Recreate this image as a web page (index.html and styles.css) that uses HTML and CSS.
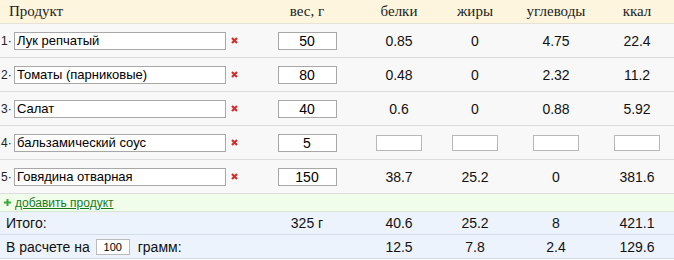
FILE: index.html
```html
<!DOCTYPE html>
<html lang="ru">
<head>
<meta charset="utf-8">
<link rel="stylesheet" href="styles.css">
</head>
<body>
<div class="calc">
  <div class="row head">
    <div class="c-name">Продукт</div>
    <div class="c">вес, г</div>
    <div class="c">белки</div>
    <div class="c">жиры</div>
    <div class="c">углеводы</div>
    <div class="c">ккал</div>
  </div>

  <div class="row item">
    <div class="c-name"><span class="num">1·</span><input class="name" value="Лук репчатый"><span class="del"><svg viewBox="0 0 7 7" width="7" height="7"><path d="M1 1L6 6M6 1L1 6"/></svg></span></div>
    <div class="c"><input class="w" value="50"></div>
    <div class="c">0.85</div><div class="c">0</div><div class="c">4.75</div><div class="c">22.4</div>
  </div>

  <div class="row item">
    <div class="c-name"><span class="num">2·</span><input class="name" value="Томаты (парниковые)"><span class="del"><svg viewBox="0 0 7 7" width="7" height="7"><path d="M1 1L6 6M6 1L1 6"/></svg></span></div>
    <div class="c"><input class="w" value="80"></div>
    <div class="c">0.48</div><div class="c">0</div><div class="c">2.32</div><div class="c">11.2</div>
  </div>

  <div class="row item">
    <div class="c-name"><span class="num">3·</span><input class="name" value="Салат"><span class="del"><svg viewBox="0 0 7 7" width="7" height="7"><path d="M1 1L6 6M6 1L1 6"/></svg></span></div>
    <div class="c"><input class="w" value="40"></div>
    <div class="c">0.6</div><div class="c">0</div><div class="c">0.88</div><div class="c">5.92</div>
  </div>

  <div class="row item">
    <div class="c-name"><span class="num">4·</span><input class="name" value="бальзамический соус"><span class="del"><svg viewBox="0 0 7 7" width="7" height="7"><path d="M1 1L6 6M6 1L1 6"/></svg></span></div>
    <div class="c"><input class="w" value="5"></div>
    <div class="c"><input class="empty"></div><div class="c"><input class="empty"></div><div class="c"><input class="empty"></div><div class="c"><input class="empty"></div>
  </div>

  <div class="row item">
    <div class="c-name"><span class="num">5·</span><input class="name" value="Говядина отварная"><span class="del"><svg viewBox="0 0 7 7" width="7" height="7"><path d="M1 1L6 6M6 1L1 6"/></svg></span></div>
    <div class="c"><input class="w" value="150"></div>
    <div class="c">38.7</div><div class="c">25.2</div><div class="c">0</div><div class="c">381.6</div>
  </div>

  <div class="add">
    <svg class="plus" viewBox="0 0 7 7" width="7" height="7"><path d="M2.5 0h2v2.5h2.5v2h-2.5v2.5h-2v-2.5h-2.5v-2h2.5z"/></svg>
    <a href="#">добавить продукт</a>
  </div>

  <div class="row total">
    <div class="c-name">Итого:</div>
    <div class="c">325 г</div>
    <div class="c">40.6</div><div class="c">25.2</div><div class="c">8</div><div class="c">421.1</div>
  </div>

  <div class="row total">
    <div class="c-name per">В расчете на <input class="per-in" value="100"> грамм:</div>
    <div class="c"></div>
    <div class="c">12.5</div><div class="c">7.8</div><div class="c">2.4</div><div class="c">129.6</div>
  </div>
</div>
</body>
</html>
```
FILE: styles.css
```css
* { box-sizing: border-box; }
body {
  margin: 0;
  background: #fff;
  font-family: "Liberation Sans", Arial, sans-serif;
  color: #111;
}
.calc { width: 674px; }
.row {
  display: grid;
  grid-template-columns: 268px 78px 106px 46px 116px 46px 14px;
  align-items: center;
  justify-items: center;
}
.c-name { justify-self: stretch; display: flex; align-items: center; }
.head {
  height: 24px;
  background: #fdf5de;
  border-bottom: 1px solid #e6e2d6;
  font-family: "Liberation Serif", "Times New Roman", serif;
  font-size: 15px;
  color: #222;
}
.head .c-name { padding-left: 9px; }
.item {
  height: 34px;
  background: #f8f8f8;
  border-bottom: 1px solid #dcdcdc;
  font-size: 14px;
}
.num { width: 14px; padding-left: 1px; font-size: 12px; color: #222; }
input {
  font-family: "Liberation Sans", Arial, sans-serif;
  border: 1px solid #a8a8a8;
  background: #fff;
  margin: 0;
  color: #000;
  outline: none;
}
.name {
  width: 212px;
  height: 18px;
  font-size: 13px;
  padding: 0 2px;
}
.del { margin-left: 5px; display: flex; }
.del svg { stroke: #d03030; stroke-width: 2.2; }
.w {
  width: 59px;
  height: 18px;
  font-size: 14px;
  text-align: center;
  padding: 0;
}
.empty { width: 46px; height: 16px; border-color: #b8b8b8; }
.add {
  height: 18px;
  background: #effdea;
  border-bottom: 1px solid #d8e6d4;
  display: flex;
  align-items: center;
  padding-left: 4px;
  font-size: 12px;
}
.plus { fill: #3aa83a; margin-right: 4px; }
.add a { color: #1a7a1a; text-decoration: underline; }
.total {
  height: 23px;
  background: #ecf3fd;
  border-bottom: 1px solid #d0dcea;
  font-size: 14px;
}
.total:last-child { height: 24px; }
.total .c-name { padding-left: 6px; }
.per-in {
  width: 34px;
  height: 16px;
  font-size: 11px;
  text-align: center;
  padding: 0;
  margin: 0 8px 0 6px;
  border-color: #bbb;
}
```
